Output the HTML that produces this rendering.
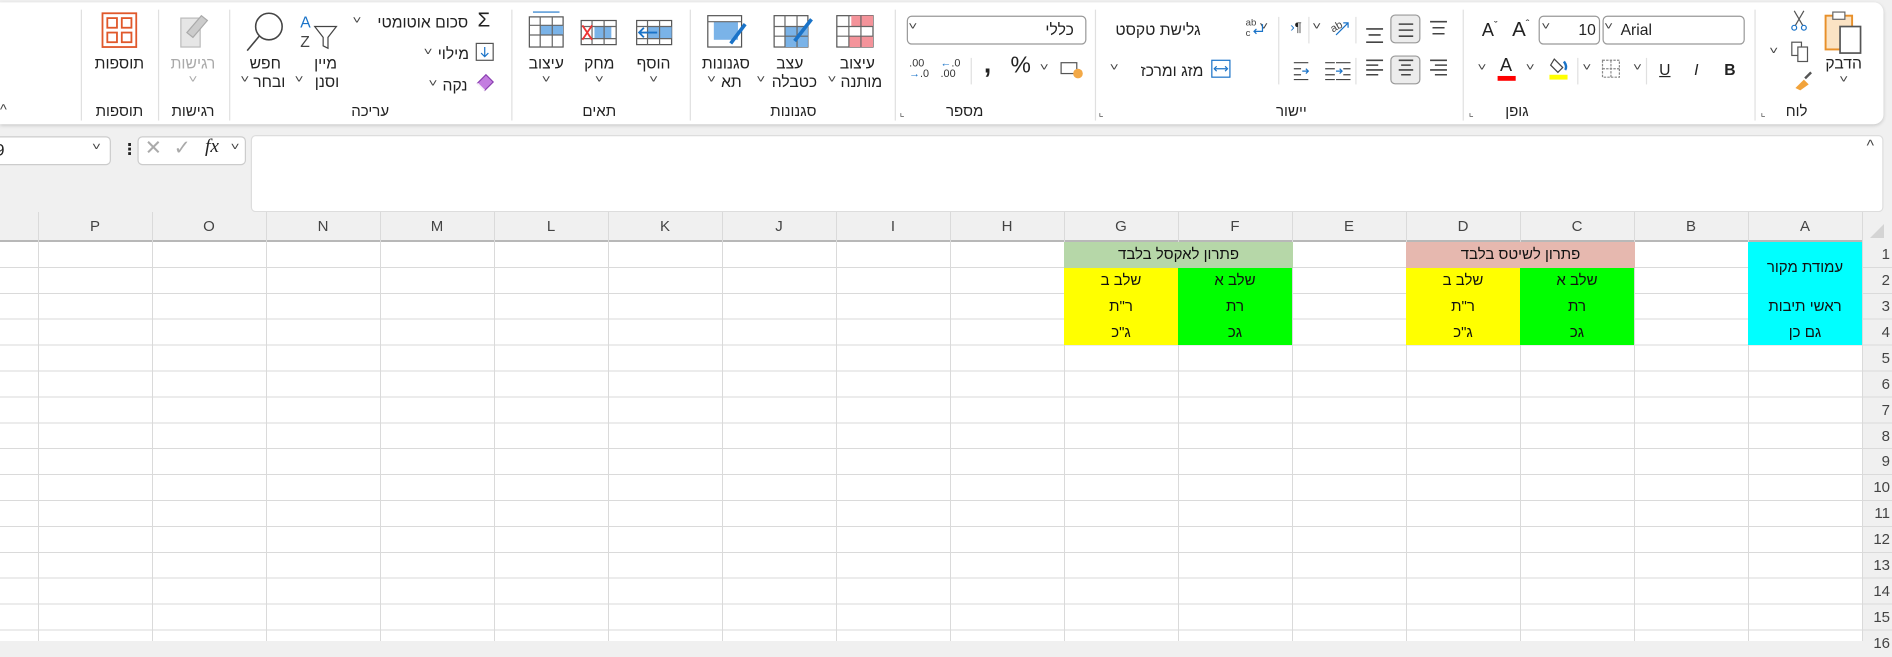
<!DOCTYPE html>
<html><head><meta charset="utf-8"><style>
*{margin:0;padding:0;box-sizing:border-box}
body{width:1892px;height:641px;overflow:hidden;background:#f0f0f0;font-family:"Liberation Sans","DejaVu Sans",sans-serif;position:relative}
#top{position:absolute;left:0;top:0;width:1569px;height:176px;transform:scale(1.2058);transform-origin:0 0}
.p{position:absolute;white-space:nowrap;font-size:13px;color:#222;line-height:15px}
.c{transform:translateX(-50%)}
.ch{position:absolute;font-size:9px;color:#444;transform:translateX(-50%) scaleX(1.4)}
.sep{position:absolute;top:8px;width:1px;height:92px;background:#e0e0e0}
.ssep{position:absolute;width:1px;background:#e0e0e0}
.lbl{position:absolute;top:85px;font-size:12.5px;color:#222;transform:translateX(-50%);white-space:nowrap}
svg{position:absolute}
#grid{position:absolute;left:0;top:212px;width:1892px;height:429px;background:#fff}
.col{position:absolute;top:0;width:1px;height:429px;background:#dadada}
.hd{position:absolute;top:0;height:30px;font-size:15px;color:#444;text-align:center;line-height:30px;width:114px}
.cell{position:absolute;height:26px;width:114px;font-size:15px;text-align:center;line-height:26px;color:#111;direction:rtl}
.rn{position:absolute;left:1862px;width:30px;text-align:right;padding-right:2px;font-size:15px;color:#444;height:26px;line-height:26px}
</style></head><body>
<div id="top">
 <div style="position:absolute;left:0;top:2px;width:1562px;height:101px;background:#fff;border-radius:0 8px 8px 0;box-shadow:0 1px 3px rgba(0,0,0,.18)"></div>
 <!-- separators -->
 <div class="sep" style="left:67px"></div><div class="sep" style="left:131px"></div><div class="sep" style="left:190px"></div><div class="sep" style="left:424px"></div><div class="sep" style="left:572px"></div><div class="sep" style="left:742px"></div><div class="sep" style="left:908px"></div><div class="sep" style="left:1213px"></div><div class="sep" style="left:1455px"></div>
 <!-- Clipboard -->
 <svg style="left:1512px;top:8px" width="34" height="38" viewBox="0 0 34 38"><rect x="2" y="5" width="22" height="28" fill="#fbe3c4" stroke="#e8902a" stroke-width="1.6"/><rect x="8" y="2" width="10" height="6" fill="#fff" stroke="#666"/><rect x="14" y="14" width="17" height="22" fill="#fff" stroke="#555" stroke-width="1.4"/></svg>
 <span class="p c" style="left:1529px;top:45px">הדבק</span><span class="ch" style="left:1529px;top:61px">˅</span>
 <svg style="left:1484px;top:8px" width="16" height="18"><path d="M4 1 L11 13 M12 1 L5 13" stroke="#555" fill="none"/><circle cx="4" cy="15" r="2" stroke="#1a73c8" fill="none"/><circle cx="12" cy="15" r="2" stroke="#1a73c8" fill="none"/></svg>
 <svg style="left:1485px;top:34px" width="16" height="18"><rect x="1" y="1" width="8" height="11" fill="#fff" stroke="#555"/><rect x="6" y="5" width="8" height="12" fill="#fff" stroke="#555"/></svg>
 <span class="ch" style="left:1471px;top:37px">˅</span>
 <svg style="left:1487px;top:58px" width="18" height="18"><path d="M2 15 L9 8 L13 12 L6 17Z" fill="#f2a33a"/><path d="M10 7 L15 2" stroke="#555" stroke-width="2"/></svg>
 <span class="lbl" style="left:1490px">לוח</span>
 <span class="p" style="left:1460px;top:86px;font-size:9px;color:#555">⌞</span>
 <!-- Font -->
 <div style="position:absolute;left:1329px;top:13px;width:118px;height:24px;border:1px solid #999;border-radius:4px;background:#fff"></div>
 <span class="p" style="left:1344px;top:17px">Arial</span><span class="ch" style="left:1334px;top:17px">˅</span>
 <div style="position:absolute;left:1276px;top:13px;width:51px;height:24px;border:1px solid #999;border-radius:4px;background:#fff"></div>
 <span class="p" style="left:1309px;top:17px">10</span><span class="ch" style="left:1282px;top:17px">˅</span>
 <span class="p" style="left:1254px;top:13px;font-size:17px">A<sup style="font-size:9px">ˆ</sup></span>
 <span class="p" style="left:1229px;top:14px;font-size:15px">A<sup style="font-size:9px">ˇ</sup></span>
 <span class="p" style="left:1430px;top:50px;font-weight:bold">B</span>
 <span class="p" style="left:1405px;top:50px;font-style:italic">I</span>
 <span class="p" style="left:1376px;top:50px;text-decoration:underline">U</span>
 <div class="ssep" style="left:1365px;top:48px;height:22px"></div>
 <span class="ch" style="left:1358px;top:51px">˅</span>
 <svg style="left:1328px;top:49px" width="16" height="16"><rect x="1" y="1" width="14" height="14" fill="none" stroke="#888" stroke-dasharray="2 1"/><path d="M8 1V15M1 8H15" stroke="#888" stroke-dasharray="2 1"/></svg>
 <span class="ch" style="left:1316px;top:51px">˅</span>
 <div class="ssep" style="left:1308px;top:48px;height:22px"></div>
 <svg style="left:1284px;top:45px" width="18" height="22"><path d="M5 4 L12 11 L8 15 L2 9Z" fill="none" stroke="#444"/><path d="M13 6 Q16 10 14 13" stroke="#1a73c8" fill="none" stroke-width="2"/><rect x="1" y="17" width="15" height="4" fill="#ff0"/></svg>
 <span class="ch" style="left:1269px;top:51px">˅</span>
 <span class="p" style="left:1244px;top:47px;font-size:15px">A</span><div style="position:absolute;left:1242px;top:63px;width:15px;height:4px;background:#f00"></div>
 <span class="ch" style="left:1229px;top:51px">˅</span>
 <span class="lbl" style="left:1258px">גופן</span>
 <span class="p" style="left:1218px;top:86px;font-size:9px;color:#555">⌞</span>
 <!-- Alignment -->
 <svg style="left:1180px;top:12px" width="80" height="60" viewBox="0 0 80 60"></svg>
 <div style="position:absolute;left:1153px;top:12px;width:25px;height:24px;border:1px solid #999;border-radius:4px;background:#ececec"></div>
 <div style="position:absolute;left:1153px;top:46px;width:25px;height:24px;border:1px solid #999;border-radius:4px;background:#ececec"></div>
 <svg style="left:1130px;top:14px" width="72" height="54" viewBox="0 0 72 54">
  <g stroke="#444" stroke-width="1.3">
   <path d="M56 4H70M58 9H68M58 14H68"/>
   <path d="M30 6H42M30 11H42M30 16H42"/>
   <path d="M3 10H17M5 15H15M3 21H17"/>
   <path d="M56 36H70M60 40H70M56 44H70M60 48H70"/>
   <path d="M30 36H42M32 40H40M30 44H42M32 48H40"/>
   <path d="M3 36H17M3 40H13M3 44H17M3 48H13"/>
  </g></svg>
 <div class="ssep" style="left:1124px;top:14px;height:22px"></div><div class="ssep" style="left:1124px;top:48px;height:22px"></div>
 <svg style="left:1102px;top:13px" width="18" height="18"><text x="1" y="11" font-size="9" fill="#444" transform="rotate(-30 8 8)">ab</text><path d="M6 16L16 6M12 6H16V10" stroke="#1a73c8" fill="none"/></svg>
 <span class="ch" style="left:1092px;top:17px">˅</span>
 <div class="ssep" style="left:1085px;top:14px;height:22px"></div>
 <span class="p" style="left:1070px;top:16px;font-size:11px"><span style="color:#1a73c8">›</span>¶</span>
 <span class="ch" style="left:1048px;top:17px">˅</span>
 <svg style="left:1072px;top:49px" width="50" height="18"><g stroke="#444"><path d="M36 3H48M42 8H48M42 13H48M36 17H48M27 3H35M27 8H35M27 13H35M27 17H35"/></g><path d="M36 10H41M39 8L41 10L39 12" stroke="#1a73c8" fill="none"/><path d="M1 3H13M1 8H7M1 13H7M1 17H13" stroke="#444"/><path d="M8 10H13M11 8L13 10L11 12" stroke="#1a73c8" fill="none"/></svg>
 <div class="ssep" style="left:1060px;top:14px;height:56px"></div>
 <svg style="left:1032px;top:13px" width="18" height="20"><text x="1" y="8" font-size="8" fill="#444">ab</text><text x="1" y="17" font-size="8" fill="#444">c</text><path d="M15 7V13H8M10 11L8 13L10 15" stroke="#1a73c8" fill="none"/></svg>
 <span class="p" style="left:925px;top:17px">גלישת טקסט</span>
 <svg style="left:1004px;top:49px" width="17" height="16"><rect x="1" y="1" width="15" height="14" fill="#fff" stroke="#1a73c8"/><path d="M4 8H13M5 6L3 8L5 10M12 6L14 8L12 10" stroke="#1a73c8" fill="none"/></svg>
 <span class="p" style="left:946px;top:51px">מזג ומרכז</span>
 <span class="ch" style="left:924px;top:51px">˅</span>
 <span class="lbl" style="left:1071px">יישור</span>
 <span class="p" style="left:911px;top:86px;font-size:9px;color:#555">⌞</span>
 <!-- Number -->
 <div style="position:absolute;left:752px;top:13px;width:149px;height:24px;border:1px solid #999;border-radius:4px;background:#fff"></div>
 <span class="p" style="left:867px;top:17px">כללי</span><span class="ch" style="left:757px;top:17px">˅</span>
 <svg style="left:879px;top:50px" width="20" height="16"><rect x="1" y="2" width="13" height="9" fill="#fff" stroke="#555"/><ellipse cx="15" cy="11" rx="4" ry="4" fill="#f3a947"/></svg>
 <span class="ch" style="left:866px;top:51px">˅</span>
 <span class="p" style="left:838px;top:47px;font-size:19px">%</span>
 <span class="p" style="left:816px;top:45px;font-size:22px;font-weight:bold">,</span>
 <div class="ssep" style="left:805px;top:48px;height:22px"></div>
 <span class="p" style="left:780px;top:48px;font-size:9px;line-height:9px;color:#333"><span style="color:#1a73c8">←</span>.0<br>.00</span>
 <span class="p" style="left:754px;top:48px;font-size:9px;line-height:9px;color:#333">.00<br><span style="color:#1a73c8">→</span>.0</span>
 <span class="lbl" style="left:800px">מספר</span>
 <span class="p" style="left:746px;top:86px;font-size:9px;color:#555">⌞</span>
 <!-- Styles -->
 <svg style="left:693px;top:12px" width="34" height="28"><rect x="1" y="1" width="30" height="26" fill="#fff" stroke="#555"/><rect x="13" y="1" width="18" height="9" fill="#f4939a"/><rect x="11" y="18" width="20" height="9" fill="#f4939a"/><path d="M1 10H31M1 18H31M11 1V27M21 1V27" stroke="#666"/></svg>
 <span class="p c" style="left:711px;top:45px">עיצוב</span><span class="p" style="left:697px;top:60px">מותנה</span><span class="ch" style="left:690px;top:61px">˅</span>
 <svg style="left:641px;top:12px" width="34" height="28"><rect x="1" y="1" width="28" height="26" fill="#fff" stroke="#555"/><rect x="10" y="10" width="19" height="17" fill="#7ab3e8"/><path d="M1 10H29M1 18H29M10 1V27M20 1V27" stroke="#666"/><path d="M32 4L18 22" stroke="#1a73c8" stroke-width="3"/></svg>
 <span class="p c" style="left:655px;top:45px">עצב</span><span class="p" style="left:640px;top:60px">כטבלה</span><span class="ch" style="left:631px;top:61px">˅</span>
 <svg style="left:586px;top:12px" width="34" height="28"><rect x="1" y="1" width="28" height="26" fill="#fff" stroke="#555"/><rect x="6" y="6" width="20" height="15" fill="#7ab3e8"/><path d="M1 6H29" stroke="#666"/><path d="M32 8L20 24" stroke="#1a73c8" stroke-width="3"/></svg>
 <span class="p c" style="left:602px;top:45px">סגנונות</span><span class="p" style="left:598px;top:60px">תא</span><span class="ch" style="left:590px;top:61px">˅</span>
 <span class="lbl" style="left:658px">סגנונות</span>
 <!-- Cells -->
 <svg style="left:527px;top:12px" width="32" height="28"><rect x="1" y="5" width="29" height="20" fill="#fff" stroke="#555"/><rect x="10" y="10" width="20" height="10" fill="#7ab3e8"/><path d="M1 10H30M1 20H30M10 5V25M20 5V25" stroke="#666"/><path d="M18 15H3M7 11L3 15L7 19" stroke="#1a73c8" fill="none" stroke-width="1.5"/></svg>
 <span class="p c" style="left:542px;top:45px">הוסף</span><span class="ch" style="left:542px;top:61px">˅</span>
 <svg style="left:481px;top:12px" width="32" height="28"><rect x="1" y="5" width="29" height="20" fill="#fff" stroke="#555"/><rect x="12" y="10" width="14" height="10" fill="#7ab3e8"/><path d="M1 10H30M1 20H30M10 5V25M20 5V25" stroke="#666"/><path d="M2 9L10 21M10 9L2 21" stroke="#e33" stroke-width="1.5"/></svg>
 <span class="p c" style="left:497px;top:45px">מחק</span><span class="ch" style="left:497px;top:61px">˅</span>
 <svg style="left:438px;top:8px" width="30" height="32"><path d="M4 2H26" stroke="#1a73c8"/><rect x="1" y="6" width="28" height="25" fill="#fff" stroke="#555"/><rect x="10" y="13" width="19" height="8" fill="#7ab3e8"/><path d="M1 13H29M1 21H29M10 6V31M20 6V31" stroke="#666"/></svg>
 <span class="p c" style="left:453px;top:45px">עיצוב</span><span class="ch" style="left:453px;top:61px">˅</span>
 <span class="lbl" style="left:497px">תאים</span>
 <!-- Editing -->
 <span class="p" style="left:396px;top:9px;font-size:17px">Σ</span>
 <span class="p" style="left:313px;top:11px">סכום אוטומטי</span><span class="ch" style="left:296px;top:12px">˅</span>
 <svg style="left:394px;top:35px" width="16" height="16"><rect x="1" y="1" width="14" height="14" fill="#fff" stroke="#555"/><path d="M8 4V12M5 9L8 12L11 9" stroke="#1a73c8" fill="none"/></svg>
 <span class="p" style="left:363px;top:37px">מילוי</span><span class="ch" style="left:355px;top:38px">˅</span>
 <svg style="left:393px;top:60px" width="18" height="16"><path d="M3 9L10 2L16 8L9 15Z" fill="#c37de0" stroke="#8a3fb0"/><path d="M3 9L9 15" stroke="#fff"/></svg>
 <span class="p" style="left:367px;top:63px">נקה</span><span class="ch" style="left:359px;top:64px">˅</span>
 <svg style="left:248px;top:10px" width="40" height="34"><text x="1" y="13" font-size="13" fill="#1a73c8" font-family="Liberation Sans">A</text><text x="1" y="29" font-size="13" fill="#444" font-family="Liberation Sans">Z</text><path d="M13 12H31L24 21V30L20 28V21Z" fill="none" stroke="#444"/></svg>
 <span class="p c" style="left:270px;top:45px">מיין</span><span class="p" style="left:261px;top:60px">וסנן</span><span class="ch" style="left:248px;top:61px">˅</span>
 <svg style="left:201px;top:8px" width="36" height="36"><circle cx="22" cy="14" r="11" fill="none" stroke="#444" stroke-width="1.3"/><path d="M14 22L4 34" stroke="#444" stroke-width="1.3"/></svg>
 <span class="p c" style="left:220px;top:45px">חפש</span><span class="p" style="left:210px;top:60px">ובחר</span><span class="ch" style="left:203px;top:61px">˅</span>
 <span class="lbl" style="left:307px">עריכה</span>
 <!-- Sensitivity -->
 <svg style="left:147px;top:9px" width="28" height="32"><rect x="3" y="6" width="16" height="24" fill="#e6e6e6" stroke="#bbb"/><path d="M8 18L20 4L25 8L13 22Z" fill="#ccc" stroke="#aaa"/></svg>
 <span class="p c" style="left:160px;top:45px;color:#aaa">רגישות</span><span class="ch" style="left:160px;top:61px;color:#aaa">˅</span>
 <span class="lbl" style="left:160px">רגישות</span>
 <!-- Add-ins -->
 <svg style="left:84px;top:10px" width="30" height="30"><rect x="1" y="1" width="28" height="28" fill="#fff" stroke="#e0582b" stroke-width="1.5"/><g fill="none" stroke="#e0582b" stroke-width="1.5"><rect x="5" y="5" width="8" height="8"/><rect x="17" y="5" width="8" height="8"/><rect x="5" y="17" width="8" height="8"/><rect x="17" y="17" width="8" height="8"/></g></svg>
 <span class="p c" style="left:99px;top:45px">תוספות</span>
 <span class="lbl" style="left:99px">תוספות</span>
 <span class="p" style="left:0px;top:84px;font-size:12px;color:#444">^</span>
 <!-- formula bar -->
 <div style="position:absolute;left:-6px;top:113px;width:98px;height:24px;border:1px solid #ccc;border-radius:4px;background:#fff"></div>
 <span class="p" style="left:-4px;top:117px;font-size:14px">9</span><span class="ch" style="left:80px;top:117px">˅</span>
 <span class="p" style="left:101px;top:116px;font-weight:bold">⋮</span>
 <div style="position:absolute;left:114px;top:113px;width:90px;height:24px;border:1px solid #ccc;border-radius:4px;background:#fff"></div>
 <span class="p" style="left:120px;top:115px;font-size:17px;color:#aaa">✕</span>
 <span class="p" style="left:144px;top:115px;font-size:17px;color:#aaa">✓</span>
 <span class="p" style="left:170px;top:114px;font-size:16px;font-style:italic;font-family:'Liberation Serif',serif">fx</span><span class="ch" style="left:195px;top:117px">˅</span>
 <div style="position:absolute;left:208px;top:112px;width:1354px;height:64px;border:1px solid #ddd;border-radius:4px;background:#fff"></div>
 <span class="p" style="left:1548px;top:113px;font-size:13px;color:#444">^</span>
</div>

<div id="grid">
 <div style="position:absolute;left:0;top:0;width:1892px;height:30px;background:#f0f0f0;border-bottom:2px solid #b8b8b8"></div>
 <div style="position:absolute;left:1862px;top:0;width:30px;height:429px;background:#f0f0f0"></div>
 <svg style="left:1866px;top:10px" width="20" height="18"><path d="M18 2V16H4Z" fill="#d4d4d4"/></svg>
 <div style="position:absolute;left:0;top:30px;width:1862px;height:399px;background:repeating-linear-gradient(to bottom,transparent 0,transparent 24.9px,#dadada 24.9px,#dadada 25.9px)"></div>
 <div style="position:absolute;left:1862px;top:30px;width:30px;height:399px;background:repeating-linear-gradient(to bottom,transparent 0,transparent 24.9px,#dadada 24.9px,#dadada 25.9px)"></div>
 <div class="col" style="left:38px"></div><div class="col" style="left:152px"></div><div class="col" style="left:266px"></div><div class="col" style="left:380px"></div><div class="col" style="left:494px"></div><div class="col" style="left:608px"></div><div class="col" style="left:722px"></div><div class="col" style="left:836px"></div><div class="col" style="left:950px"></div><div class="col" style="left:1064px"></div><div class="col" style="left:1178px"></div><div class="col" style="left:1292px"></div><div class="col" style="left:1406px"></div><div class="col" style="left:1520px"></div><div class="col" style="left:1634px"></div><div class="col" style="left:1748px"></div><div class="col" style="left:1862px"></div>
 <div class="hd" style="left:38px">P</div><div class="hd" style="left:152px">O</div><div class="hd" style="left:266px">N</div><div class="hd" style="left:380px">M</div><div class="hd" style="left:494px">L</div><div class="hd" style="left:608px">K</div><div class="hd" style="left:722px">J</div><div class="hd" style="left:836px">I</div><div class="hd" style="left:950px">H</div><div class="hd" style="left:1064px">G</div><div class="hd" style="left:1178px">F</div><div class="hd" style="left:1292px">E</div><div class="hd" style="left:1406px">D</div><div class="hd" style="left:1520px">C</div><div class="hd" style="left:1634px">B</div><div class="hd" style="left:1748px">A</div>
 <!-- cells -->
 <div class="cell" style="left:1064px;top:30px;width:229px;background:#b6d7a8">פתרון לאקסל בלבד</div>
 <div class="cell" style="left:1406px;top:30px;width:229px;background:#e6b8af">פתרון לשיטס בלבד</div>
 <div class="cell" style="left:1064px;top:56px;background:#ff0">שלב ב</div><div class="cell" style="left:1178px;top:56px;background:#0f0">שלב א</div>
 <div class="cell" style="left:1064px;top:82px;background:#ff0">ר"ת</div><div class="cell" style="left:1178px;top:82px;background:#0f0">רת</div>
 <div class="cell" style="left:1064px;top:108px;height:25px;background:#ff0">ג"כ</div><div class="cell" style="left:1178px;top:108px;height:25px;background:#0f0">גכ</div>
 <div class="cell" style="left:1406px;top:56px;background:#ff0">שלב ב</div><div class="cell" style="left:1520px;top:56px;background:#0f0">שלב א</div>
 <div class="cell" style="left:1406px;top:82px;background:#ff0">ר"ת</div><div class="cell" style="left:1520px;top:82px;background:#0f0">רת</div>
 <div class="cell" style="left:1406px;top:108px;height:25px;background:#ff0">ג"כ</div><div class="cell" style="left:1520px;top:108px;height:25px;background:#0f0">גכ</div>
 <div class="cell" style="left:1748px;top:30px;height:52px;line-height:52px;background:#0ff">עמודת מקור</div>
 <div class="cell" style="left:1748px;top:82px;background:#0ff">ראשי תיבות</div>
 <div class="cell" style="left:1748px;top:108px;height:25px;background:#0ff">גם כן</div>
 <div class="rn" style="top:30px">1</div><div class="rn" style="top:56px">2</div><div class="rn" style="top:82px">3</div><div class="rn" style="top:108px">4</div><div class="rn" style="top:134px">5</div><div class="rn" style="top:160px">6</div><div class="rn" style="top:186px">7</div><div class="rn" style="top:212px">8</div><div class="rn" style="top:237px">9</div><div class="rn" style="top:263px">10</div><div class="rn" style="top:289px">11</div><div class="rn" style="top:315px">12</div><div class="rn" style="top:341px">13</div><div class="rn" style="top:367px">14</div><div class="rn" style="top:393px">15</div><div class="rn" style="top:419px">16</div>
</div>
</body></html>
